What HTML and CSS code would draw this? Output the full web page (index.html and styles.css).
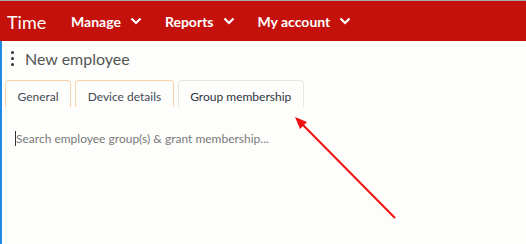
FILE: index.html
```html
<!DOCTYPE html>
<html>
<head>
<meta charset="utf-8">
<link rel="stylesheet" href="styles.css">
</head>
<body>
<header class="topbar">
  <span class="brand">Time</span>
  <nav class="nav">
    <span class="nav-item">Manage <svg class="chev" viewBox="0 0 12 8"><path d="M1.5 1.5 L6 6 L10.5 1.5" /></svg></span>
    <span class="nav-item">Reports <svg class="chev" viewBox="0 0 12 8"><path d="M1.5 1.5 L6 6 L10.5 1.5" /></svg></span>
    <span class="nav-item">My account <svg class="chev" viewBox="0 0 12 8"><path d="M1.5 1.5 L6 6 L10.5 1.5" /></svg></span>
  </nav>
</header>
<main class="content">
  <div class="title-row">
    <span class="kebab"><i></i><i></i><i></i></span>
    <h1 class="title">New employee</h1>
  </div>
  <div class="tabs">
    <div class="tab tab-warm">General</div>
    <div class="tab tab-warm">Device details</div>
    <div class="tab tab-active">Group membership</div>
  </div>
  <div class="search"><span class="caret"></span><span class="placeholder">Search employee group(s) &amp; grant membership...</span></div>
  <svg class="arrow" viewBox="0 0 526 244" width="526" height="244">
    <line x1="395" y1="217" x2="300" y2="121" stroke="#f01010" stroke-width="2"/>
    <polygon points="295,116 307,121 300,128" fill="#f01010"/>
  </svg>
</main>
</body>
</html>
```
FILE: styles.css
```css
html, body {
  margin: 0;
  padding: 0;
}
body {
  width: 526px;
  height: 244px;
  overflow: hidden;
  background: #fdfdfb;
  font-family: Lato, "Open Sans", sans-serif;
  border-top: 1px solid #a8a8a8;
  box-sizing: border-box;
  position: relative;
}
.topbar {
  height: 40px;
  background: #c5110b;
  display: flex;
  align-items: center;
  color: #fff;
}
.brand {
  font-size: 18px;
  padding-left: 7px;
  width: 64px;
  margin-top: 1px;
}
.nav {
  display: flex;
}
.nav-item {
  font-weight: bold;
  font-size: 14px;
  display: flex;
  align-items: center;
  margin-right: 23px;
}
.chev {
  width: 12px;
  height: 8px;
  margin-left: 9px;
  fill: none;
  stroke: #fff;
  stroke-width: 2.2;
}
.content {
  border-left: 2px solid #1e88e5;
  height: 203px;
  box-sizing: border-box;
  padding: 8px 0 0 3px;
}
.title-row {
  display: flex;
  align-items: center;
  height: 19px;
}
.kebab {
  display: flex;
  flex-direction: column;
  gap: 3px;
  width: 4px;
  margin-left: 6px;
  margin-right: 10px;
}
.kebab i {
  width: 3px;
  height: 3px;
  border-radius: 50%;
  background: #333;
}
.title {
  margin: 0;
  font-size: 16px;
  font-weight: normal;
  color: #555;
}
.tabs {
  display: flex;
  gap: 4px;
  margin-top: 12px;
}
.tab {
  height: 27px;
  box-sizing: border-box;
  padding: 8px 11.5px 0 11.5px;
  font-size: 12px;
  color: #454a55;
  border: 1px solid #f5d3b0;
  border-bottom: none;
  border-radius: 4px 4px 0 0;
}
.tab-warm {
  border-color: #f6d2ab;
}
.tab-active {
  border-color: #ebe3e3;
  color: #2e3340;
}
.search {
  display: flex;
  align-items: center;
  margin-top: 23px;
  margin-left: 10px;
  height: 16px;
}
.caret {
  width: 1px;
  height: 15px;
  background: #333;
}
.placeholder {
  font-size: 12px;
  color: #7a7a7a;
}
.arrow {
  position: absolute;
  left: 0;
  top: 0;
  pointer-events: none;
}
```
